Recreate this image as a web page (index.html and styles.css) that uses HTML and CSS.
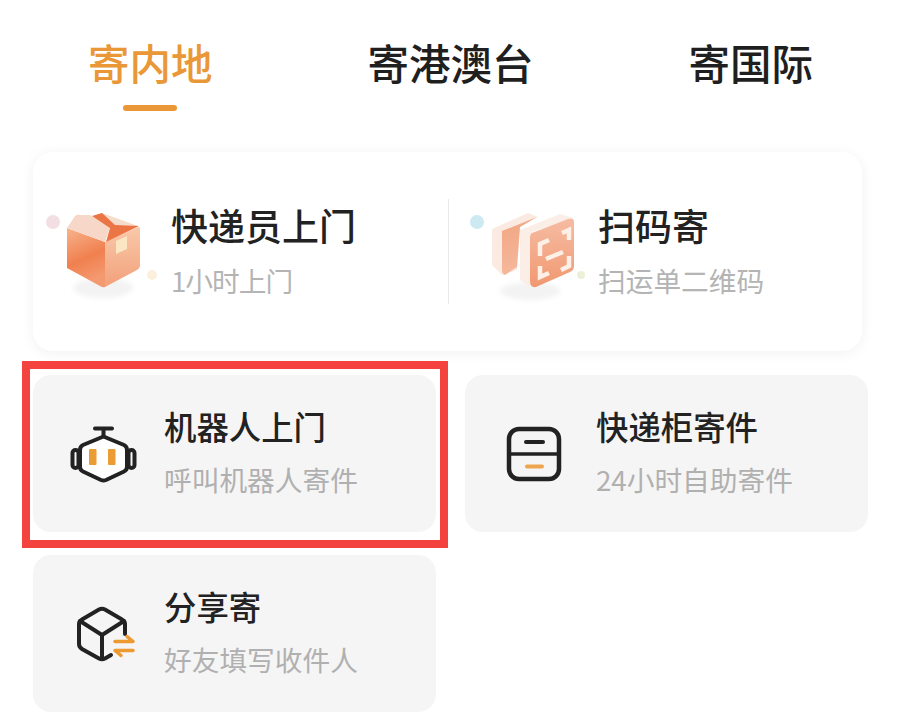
FILE: index.html
```html
<!DOCTYPE html>
<html lang="zh-CN">
<head>
<meta charset="utf-8">
<title>寄件</title>
<link rel="stylesheet" href="styles.css">
</head>
<body>
<main class="page">
  <nav class="tabs">
    <div class="tab tab-active"><span>寄内地</span><i class="tab-bar"></i></div>
    <div class="tab"><span>寄港澳台</span></div>
    <div class="tab"><span>寄国际</span></div>
  </nav>

  <section class="hero-card">
    <div class="hero-item hero-left">
      <svg class="hero-icon" width="120" height="100" viewBox="45 205 120 100">
        <defs>
          <linearGradient id="boxL" x1="0" y1="0" x2="0.3" y2="1"><stop offset="0" stop-color="#f8b48e"/><stop offset="0.6" stop-color="#f0804f"/><stop offset="1" stop-color="#f49a70"/></linearGradient>
          <linearGradient id="boxR" x1="0" y1="0" x2="0" y2="1"><stop offset="0" stop-color="#f9c9aa"/><stop offset="1" stop-color="#f2a07a"/></linearGradient>
          <filter id="soft" x="-20%" y="-20%" width="140%" height="140%"><feGaussianBlur stdDeviation="0.6"/></filter>
          <filter id="softer" x="-20%" y="-40%" width="140%" height="180%"><feGaussianBlur stdDeviation="2.500"/></filter>
        </defs>
        <circle cx="53" cy="222" r="7" fill="#f3dfe3" filter="url(#soft)"/>
        <circle cx="152" cy="275" r="5" fill="#fbf0dc" filter="url(#soft)"/>
        <ellipse cx="103" cy="288" rx="30" ry="10" fill="#f3f3f3" filter="url(#softer)"/>
        <g filter="url(#soft)">
          <path d="M67 228 L105 242 L105 287 Q103 288 100 286 L67 268 Z" fill="url(#boxL)"/>
          <path d="M105 242 L138 227 L140 228 L140 266 Q140 268 137 270 L105 287 Z" fill="url(#boxR)"/>
          <path d="M102 213 L138 226 L113 227 L96 216 Z" fill="#f6dccb"/>
          <path d="M67 228 L75 216 Q77 214 81 215 L90 215 L110 227 L105 242 Z" fill="#f7d8c8"/>
          <path d="M92 216 L102 213 L115 225 L139 226 L106 242 L110 228 Z" fill="#ec7444"/>
          <path d="M116 241 L127 236 L127 249 L116 254 Z" fill="#fbe6c4"/>
        </g>
      </svg>
      <div class="hero-text">
        <h2 class="hero-title">快递员上门</h2>
        <p class="hero-sub hero-sub-tight">1小时上门</p>
      </div>
    </div>
    <div class="hero-divider"></div>
    <div class="hero-item hero-right">
      <svg class="hero-icon" width="120" height="100" viewBox="465 205 120 100">
        <defs>
          <linearGradient id="scanA" x1="0" y1="0" x2="0.2" y2="1"><stop offset="0" stop-color="#f1a582"/><stop offset="1" stop-color="#f5b89c"/></linearGradient>
          <linearGradient id="scanB" x1="0" y1="0" x2="0" y2="1"><stop offset="0" stop-color="#f6bca3"/><stop offset="1" stop-color="#f19870"/></linearGradient>
        </defs>
        <circle cx="477" cy="222" r="7" fill="#cdeaf3" filter="url(#soft)"/>
        <circle cx="581" cy="275" r="4" fill="#edf0d8" filter="url(#soft)"/>
        <ellipse cx="530" cy="291" rx="30" ry="9" fill="#f3f3f3" filter="url(#softer)"/>
        <g filter="url(#soft)">
          <path d="M492 229 L528 213 L538 217 L520 226 L517 270 L502 275 L492 265 Z" fill="#fbeae1"/>
          <path d="M502 231 L537 217 L520 227 L517 267 L505 275 Q502 274 502 270 Z" fill="url(#scanA)"/>
          <path d="M520 230 L560 214 L573 218 L532 232 L530 287 L520 280 Z" fill="#fbeee7"/>
          <path d="M532 233 Q530 234 530 238 L530 281 Q530 288 536 287 L570 272 Q574 270 574 266 L574 222 Q574 217 568 219 Z" fill="url(#scanB)"/>
          <path d="M540 256 V244 L549 240 M562 233 L569 230 V240 M540 266 V277 L549 273 M561 270 L569 266 V256 M546 259 L563 252" fill="none" stroke="#fdf0e6" stroke-width="4.500"/>
        </g>
      </svg>
      <div class="hero-text">
        <h2 class="hero-title">扫码寄</h2>
        <p class="hero-sub">扫运单二维码</p>
      </div>
    </div>
  </section>

  <section class="grid">
    <article class="card card-marked">
      <svg class="card-icon" width="72" height="60" viewBox="65 423 72 60" fill="none">
        <path d="M95 427.500 H112 M103.500 427.500 V435" stroke="#222" stroke-width="4" stroke-linecap="round"/>
        <path d="M103.500 435.500 L124 444 Q127 445.500 127 449 V466 Q127 469 124 470.500 L106 479 Q103.500 480 101 479 L83 470.500 Q80 469 80 466 V449 Q80 445.500 83 444 Z" fill="#fff" stroke="#222" stroke-width="4" stroke-linejoin="round"/>
        <rect x="72.500" y="449" width="6" height="18" rx="3" stroke="#222" stroke-width="4"/>
        <rect x="128.500" y="449" width="6" height="18" rx="3" stroke="#222" stroke-width="4"/>
        <rect x="89" y="448" width="7.500" height="16" rx="1" fill="#eb9c35"/>
        <rect x="108" y="448" width="7.500" height="16" rx="1" fill="#eb9c35"/>
      </svg>
      <div class="card-text">
        <h3 class="card-title">机器人上门</h3>
        <p class="card-sub">呼叫机器人寄件</p>
      </div>
    </article>

    <article class="card">
      <svg class="card-icon" width="72" height="60" viewBox="497 423 72 60" fill="none">
        <rect x="509" y="428" width="50" height="50" rx="10" stroke="#222" stroke-width="4.500"/>
        <path d="M509 453 H559" stroke="#222" stroke-width="3.500"/>
        <path d="M526 441 H543" stroke="#222" stroke-width="4" stroke-linecap="round"/>
        <path d="M527 465.500 H542" stroke="#eda64e" stroke-width="4" stroke-linecap="round"/>
      </svg>
      <div class="card-text">
        <h3 class="card-title">快递柜寄件</h3>
        <p class="card-sub">24小时自助寄件</p>
      </div>
    </article>

    <article class="card">
      <svg class="card-icon" width="72" height="60" viewBox="65 603 72 60" fill="none">
        <path d="M125 633 V623 Q125 620 122 618.500 L105 608.500 Q102 607 99 608.500 L82 618.500 Q79 620 79 623 V643 Q79 646 82 648 L99 657.500 Q102 659 105 657.500 L111 654" stroke="#222" stroke-width="4" stroke-linecap="round"/>
        <path d="M80 620 L102 634 L124 620 M102 634 V657" stroke="#222" stroke-width="4" stroke-linecap="round" stroke-linejoin="round"/>
        <path d="M115 640.500 H133 L127 635.500 M133 649.500 H115 L121 654.500" stroke="#ee9a33" stroke-width="3.500" stroke-linecap="round" stroke-linejoin="round"/>
      </svg>
      <div class="card-text">
        <h3 class="card-title">分享寄</h3>
        <p class="card-sub">好友填写收件人</p>
      </div>
    </article>
  </section>
</main>
</body>
</html>
```

FILE: styles.css
```css
* {
  box-sizing: border-box;
}

html,
body {
  margin: 0;
  padding: 0;
  background: #fff;
}

.page {
  width: 900px;
  height: 724px;
  overflow: hidden;
  padding-top: 32px;
  font-family: "Noto Sans CJK SC", "Noto Sans", sans-serif;
}

.tabs {
  display: flex;
  height: 79px;
  padding-left: 88px;
  gap: 155px;
}

.tab {
  display: flex;
  flex-direction: column;
  align-items: center;
  gap: 13px;
  font-size: 41.500px;
  line-height: 60px;
  font-weight: 500;
  color: #1f1f1f;
}

.tab-active {
  color: #ea9737;
}

.tab-bar {
  display: block;
  width: 54px;
  height: 6px;
  border-radius: 3px;
  background: #ea9737;
}

.hero-card {
  display: flex;
  align-items: center;
  width: 829px;
  height: 199px;
  margin: 41px 0 24px 33px;
  border-radius: 20px;
  background: #fff;
  box-shadow: 0 2px 14px rgba(0, 0, 0, 0.06);
}

.hero-item {
  display: flex;
  align-items: center;
  height: 100%;
  padding-top: 2px;
}

.hero-left {
  width: 415px;
  padding-left: 12px;
  gap: 6px;
}

.hero-right {
  padding-left: 16px;
  gap: 13px;
}

.hero-icon {
  flex: none;
  margin-top: 5px;
}

.hero-text {
  padding-bottom: 6px;
}

.hero-divider {
  width: 1px;
  height: 105px;
  background: #e9e9e9;
}

.hero-title {
  margin: 0;
  font-size: 37px;
  line-height: 50px;
  font-weight: 500;
  color: #222;
}

.hero-sub {
  margin: 10px 0 0;
  font-size: 27.700px;
  line-height: 40px;
  font-weight: 400;
  color: #b4b4b4;
}

.hero-sub-tight {
  letter-spacing: -1px;
}

.grid {
  display: grid;
  grid-template-columns: 403px 403px;
  grid-auto-rows: 157px;
  column-gap: 29px;
  row-gap: 23px;
  padding-left: 33px;
}

.card {
  position: relative;
  display: flex;
  align-items: center;
  gap: 27px;
  padding-left: 32px;
  border-radius: 18px;
  background: #f5f5f5;
}

.card-marked::after {
  content: "";
  position: absolute;
  top: -14px;
  right: -12px;
  bottom: -16px;
  left: -11px;
  border: 8px solid #f4433f;
}

.card-icon {
  flex: none;
}

.card-text {
  padding-bottom: 5px;
}

.card-title {
  margin: 0;
  font-size: 32.400px;
  line-height: 44px;
  font-weight: 500;
  color: #222;
}

.card-sub {
  margin: 11px 0 0;
  font-size: 27.700px;
  line-height: 40px;
  font-weight: 400;
  color: #b0b0b0;
}
```
